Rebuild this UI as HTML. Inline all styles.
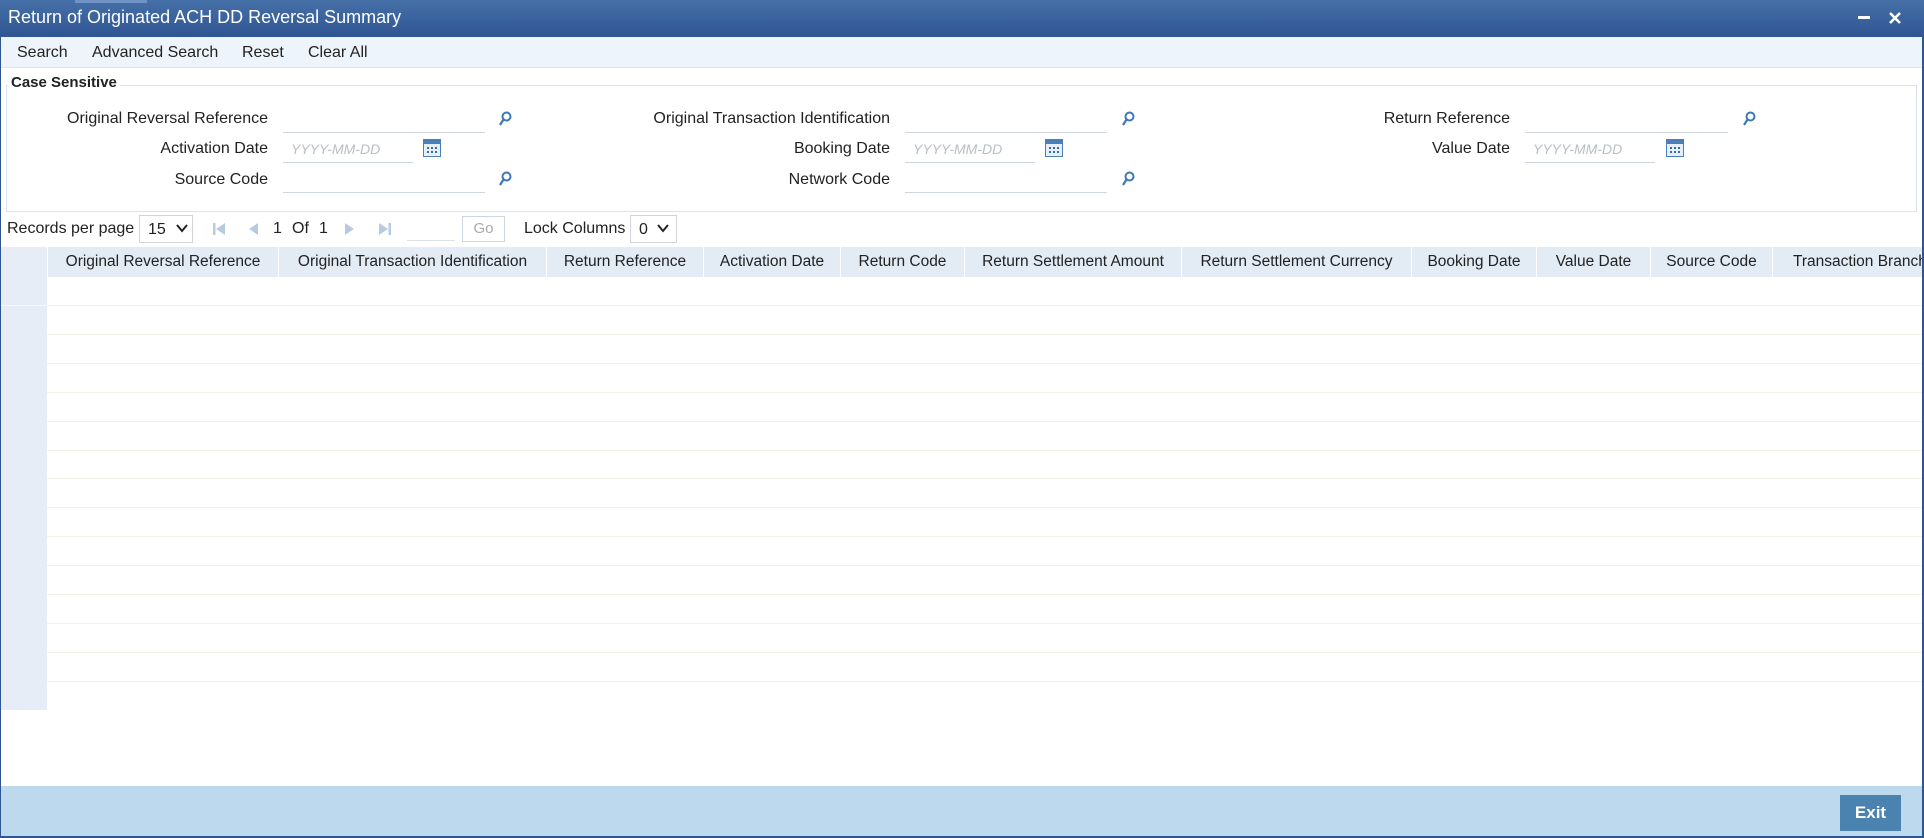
<!DOCTYPE html>
<html><head><meta charset="utf-8"><style>
*{margin:0;padding:0;box-sizing:border-box}
body{width:1924px;height:838px;overflow:hidden;background:#fff;font-family:"Liberation Sans",Arial,sans-serif;font-size:16px;color:#222;position:relative}
.a{position:absolute;white-space:nowrap}
#title{left:0;top:0;width:1924px;height:37px;background:linear-gradient(#4670a8,#2f5592);color:#fff;font-size:18px;line-height:35px;padding-left:8px}
#tb{left:0;top:37px;width:1924px;height:31px;background:#eef4fb;border-bottom:1px solid #dde6f0}
#tb span{position:absolute;top:7px;font-size:16px;color:#222}
.lbl{text-align:right;font-size:16px}
.inp{height:1px;background:#cfd6de}
.ph{color:#b9bfc6;font-style:italic;font-size:14px}
.th{top:247px;height:30px;line-height:30px;font-size:15.5px;color:#222;text-align:center;border-right:1px solid #fff}
.row{left:47px;width:1877px;height:1px;background:#f3f0e4}
</style></head><body>
<div class="a" id="title">Return of Originated ACH DD Reversal Summary</div>
<div class="a" style="left:75px;top:0;width:72px;height:3px;background:#6f93c4"></div>
<div class="a" style="left:1858px;top:16px;width:12px;height:3px;background:#fff"></div>
<svg class="a" style="left:1888px;top:11px" width="14" height="14"><path d="M2 2L12 12M12 2L2 12" stroke="#fff" stroke-width="2.6"/></svg>
<div class="a" id="tb"><span style="left:17px">Search</span><span style="left:92px">Advanced Search</span><span style="left:242px">Reset</span><span style="left:308px">Clear All</span></div>
<div class="a" style="left:6px;top:85px;width:1911px;height:127px;border:1px solid #dde3ea"></div>
<div class="a" style="left:8px;top:74px;background:#fff;padding:0 3px;font-weight:bold;font-size:15px">Case Sensitive</div>

<div class="a lbl" style="right:1656px;top:110px">Original Reversal Reference</div>
<div class="a inp" style="left:283px;top:132px;width:202px"></div>
<div class="a lbl" style="right:1656px;top:140px">Activation Date</div>
<div class="a ph" style="left:291px;top:141px">YYYY-MM-DD</div>
<div class="a inp" style="left:283px;top:162px;width:130px"></div>
<div class="a lbl" style="right:1656px;top:171px">Source Code</div>
<div class="a inp" style="left:283px;top:192px;width:202px"></div>

<div class="a lbl" style="right:1034px;top:110px">Original Transaction Identification</div>
<div class="a inp" style="left:905px;top:132px;width:202px"></div>
<div class="a lbl" style="right:1034px;top:140px">Booking Date</div>
<div class="a ph" style="left:913px;top:141px">YYYY-MM-DD</div>
<div class="a inp" style="left:905px;top:162px;width:130px"></div>
<div class="a lbl" style="right:1034px;top:171px">Network Code</div>
<div class="a inp" style="left:905px;top:192px;width:202px"></div>

<div class="a lbl" style="right:414px;top:110px">Return Reference</div>
<div class="a inp" style="left:1525px;top:132px;width:203px"></div>
<div class="a lbl" style="right:414px;top:140px">Value Date</div>
<div class="a ph" style="left:1533px;top:141px">YYYY-MM-DD</div>
<div class="a inp" style="left:1525px;top:162px;width:130px"></div>

<svg class="a" style="left:498px;top:111px" width="14" height="16"><circle cx="8.5" cy="5.5" r="4" fill="none" stroke="#3f78b5" stroke-width="2"/><path d="M5.5 8.5L2 14" stroke="#3f78b5" stroke-width="2.2"/></svg>
<svg class="a" style="left:498px;top:171px" width="14" height="16"><circle cx="8.5" cy="5.5" r="4" fill="none" stroke="#3f78b5" stroke-width="2"/><path d="M5.5 8.5L2 14" stroke="#3f78b5" stroke-width="2.2"/></svg>
<svg class="a" style="left:1121px;top:111px" width="14" height="16"><circle cx="8.5" cy="5.5" r="4" fill="none" stroke="#3f78b5" stroke-width="2"/><path d="M5.5 8.5L2 14" stroke="#3f78b5" stroke-width="2.2"/></svg>
<svg class="a" style="left:1121px;top:171px" width="14" height="16"><circle cx="8.5" cy="5.5" r="4" fill="none" stroke="#3f78b5" stroke-width="2"/><path d="M5.5 8.5L2 14" stroke="#3f78b5" stroke-width="2.2"/></svg>
<svg class="a" style="left:1742px;top:111px" width="14" height="16"><circle cx="8.5" cy="5.5" r="4" fill="none" stroke="#3f78b5" stroke-width="2"/><path d="M5.5 8.5L2 14" stroke="#3f78b5" stroke-width="2.2"/></svg>

<svg class="a" style="left:423px;top:139px" width="18" height="18"><rect x="0.5" y="0.5" width="17" height="17" fill="#e6eef8" stroke="#4a7fb8"/><rect x="1" y="1" width="16" height="4" fill="#4a7fb8"/><g fill="#3a6aa0"><rect x="4" y="8" width="2" height="2"/><rect x="8" y="8" width="2" height="2"/><rect x="12" y="8" width="2" height="2"/><rect x="4" y="12" width="2" height="2"/><rect x="8" y="12" width="2" height="2"/><rect x="12" y="12" width="2" height="2"/></g></svg>
<svg class="a" style="left:1045px;top:139px" width="18" height="18"><rect x="0.5" y="0.5" width="17" height="17" fill="#e6eef8" stroke="#4a7fb8"/><rect x="1" y="1" width="16" height="4" fill="#4a7fb8"/><g fill="#3a6aa0"><rect x="4" y="8" width="2" height="2"/><rect x="8" y="8" width="2" height="2"/><rect x="12" y="8" width="2" height="2"/><rect x="4" y="12" width="2" height="2"/><rect x="8" y="12" width="2" height="2"/><rect x="12" y="12" width="2" height="2"/></g></svg>
<svg class="a" style="left:1666px;top:139px" width="18" height="18"><rect x="0.5" y="0.5" width="17" height="17" fill="#e6eef8" stroke="#4a7fb8"/><rect x="1" y="1" width="16" height="4" fill="#4a7fb8"/><g fill="#3a6aa0"><rect x="4" y="8" width="2" height="2"/><rect x="8" y="8" width="2" height="2"/><rect x="12" y="8" width="2" height="2"/><rect x="4" y="12" width="2" height="2"/><rect x="8" y="12" width="2" height="2"/><rect x="12" y="12" width="2" height="2"/></g></svg>

<div class="a" style="left:7px;top:220px;font-size:16px">Records per page</div>
<div class="a" style="left:139px;top:215px;width:54px;height:28px;border:1px solid #d0d5db;padding:5px 0 0 8px;font-size:16px">15</div>
<svg class="a" style="left:176px;top:224px" width="12" height="9"><path d="M1 1L6 7L11 1" fill="none" stroke="#222" stroke-width="2"/></svg>
<svg class="a" style="left:212px;top:221px" width="14" height="16"><rect x="1" y="2" width="2.5" height="12" fill="#b6cbe2"/><path d="M13 2L4 8L13 14Z" fill="#b6cbe2"/></svg>
<svg class="a" style="left:247px;top:221px" width="12" height="16"><path d="M11 2L2 8L11 14Z" fill="#b6cbe2"/></svg>
<div class="a" style="left:273px;top:220px;font-size:16px">1</div>
<div class="a" style="left:292px;top:220px;font-size:16px">Of</div>
<div class="a" style="left:319px;top:220px;font-size:16px">1</div>
<svg class="a" style="left:344px;top:221px" width="12" height="16"><path d="M1 2L10 8L1 14Z" fill="#b6cbe2"/></svg>
<svg class="a" style="left:378px;top:221px" width="14" height="16"><path d="M1 2L10 8L1 14Z" fill="#b6cbe2"/><rect x="10.5" y="2" width="2.5" height="12" fill="#b6cbe2"/></svg>
<div class="a inp" style="left:407px;top:240px;width:48px;background:#dde2e7"></div>
<div class="a" style="left:462px;top:216px;width:43px;height:26px;border:1px solid #cfd5dc;color:#aaa;text-align:center;line-height:24px;font-size:15px">Go</div>
<div class="a" style="left:524px;top:220px;font-size:16px">Lock Columns</div>
<div class="a" style="left:630px;top:215px;width:47px;height:28px;border:1px solid #d0d5db;padding:5px 0 0 8px;font-size:16px">0</div>
<svg class="a" style="left:657px;top:224px" width="12" height="9"><path d="M1 1L6 7L11 1" fill="none" stroke="#222" stroke-width="2"/></svg>

<div class="a" style="left:0;top:247px;width:1924px;height:30px;background:#e3ebf5"></div>
<div class="a" style="left:0;top:247px;width:47px;height:463px;background:#e6edf6"></div>
<div class="a" style="left:47px;top:247px;width:1px;height:30px;background:#fff"></div>
<div class="a th" style="left:48px;width:231px">Original Reversal Reference</div>
<div class="a th" style="left:279px;width:268px">Original Transaction Identification</div>
<div class="a th" style="left:547px;width:157px">Return Reference</div>
<div class="a th" style="left:704px;width:137px">Activation Date</div>
<div class="a th" style="left:841px;width:124px">Return Code</div>
<div class="a th" style="left:965px;width:217px">Return Settlement Amount</div>
<div class="a th" style="left:1182px;width:230px">Return Settlement Currency</div>
<div class="a th" style="left:1412px;width:125px">Booking Date</div>
<div class="a th" style="left:1537px;width:114px">Value Date</div>
<div class="a th" style="left:1651px;width:122px">Source Code</div>
<div class="a th" style="left:1773px;width:160px;text-align:left;padding-left:20px;overflow:hidden;border:none">Transaction Branch</div>
<div class="a row" style="top:305px"></div><div class="a row" style="top:334px"></div><div class="a row" style="top:363px"></div><div class="a row" style="top:392px"></div><div class="a row" style="top:421px"></div><div class="a row" style="top:450px"></div><div class="a row" style="top:478px"></div><div class="a row" style="top:507px"></div><div class="a row" style="top:536px"></div><div class="a row" style="top:565px"></div><div class="a row" style="top:594px"></div><div class="a row" style="top:623px"></div><div class="a row" style="top:652px"></div><div class="a row" style="top:681px"></div>
<div class="a" style="left:0;top:305px;width:47px;height:1px;background:#f4f7fb"></div>

<div class="a" style="left:0;top:786px;width:1924px;height:52px;background:#bdd9ed"></div>
<div class="a" style="left:1840px;top:795px;width:61px;height:36px;background:#4a82b0;color:#fff;font-weight:bold;font-size:17px;text-align:center;line-height:36px">Exit</div>
<div class="a" style="left:0;top:37px;width:1px;height:801px;background:#2f5592"></div>
<div class="a" style="right:0;top:37px;width:2px;height:801px;background:#2f5592"></div>
<div class="a" style="left:0;bottom:0;width:1924px;height:2px;background:#2f5592"></div>
</body></html>
